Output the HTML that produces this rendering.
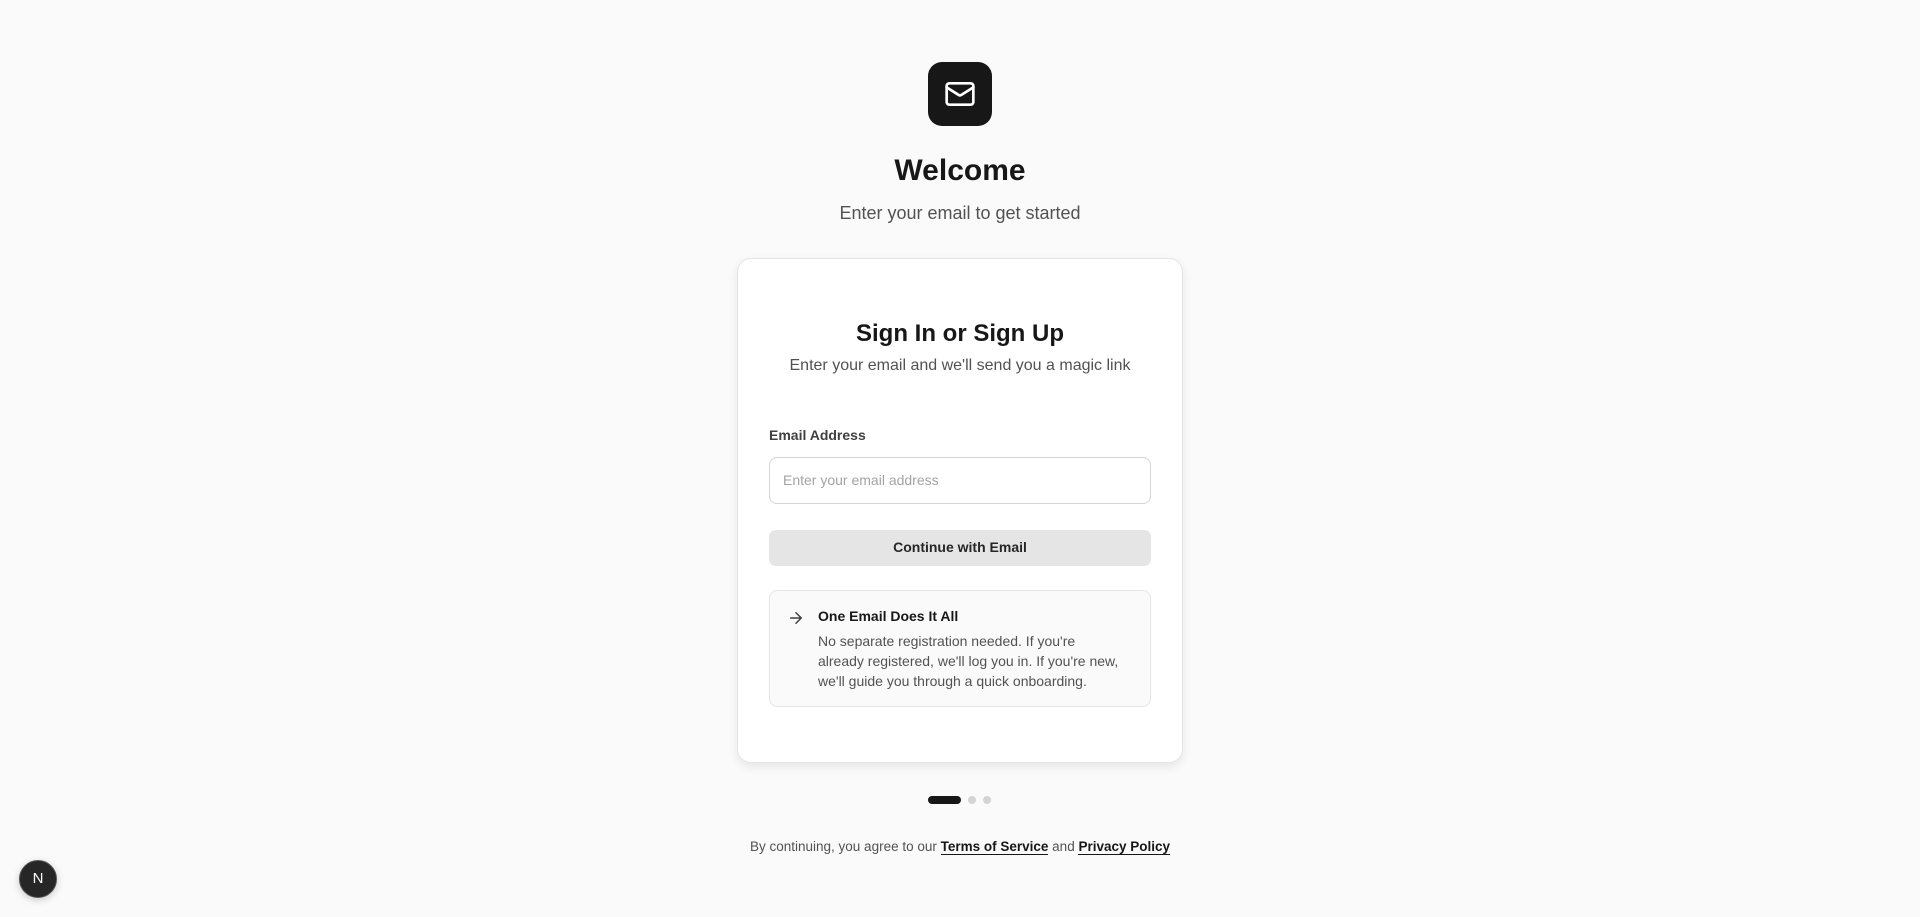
<!DOCTYPE html>
<html><head><meta charset="utf-8"><style>
*{box-sizing:border-box;margin:0;padding:0}
body{width:1920px;height:917px;background:#fafafa;font-family:"Liberation Sans",sans-serif;color:#171717;position:relative;overflow:hidden}
.logo{position:absolute;left:928px;top:62px;width:64px;height:64px;border-radius:14px;background:#171717;display:flex;align-items:center;justify-content:center}
h1{position:absolute;top:154px;width:100%;text-align:center;font-size:30px;font-weight:700}
.sub{position:absolute;top:203px;width:100%;text-align:center;font-size:18px;color:#525252}
.card{position:absolute;left:737px;top:258px;width:446px;height:505px;background:#fff;border:1px solid #e5e5e5;border-radius:14px;box-shadow:0 4px 10px rgba(0,0,0,.08)}
.card h2{position:absolute;top:61px;width:100%;text-align:center;font-size:24px;font-weight:700}
.card .s2{position:absolute;top:98px;width:100%;text-align:center;font-size:16px;color:#525252}
.lbl{position:absolute;left:31px;top:168px;font-size:14px;font-weight:600;color:#404040}
.inp{position:absolute;left:31px;top:198px;width:382px;height:47px;border:1px solid #d4d4d4;border-radius:8px;padding-left:13px;line-height:45px;font-size:14px;color:#a3a3a3}
.btn{position:absolute;left:31px;top:271px;width:382px;height:36px;border-radius:7px;background:#e5e5e5;text-align:center;line-height:35px;font-size:14px;font-weight:700;color:#262626}
.info{position:absolute;left:31px;top:331px;width:382px;height:117px;border:1px solid #e5e5e5;border-radius:8px;background:#fafafa}
.info .t{position:absolute;left:48px;top:17px;font-size:14px;font-weight:700}
.info .d{position:absolute;left:48px;top:40px;width:306px;font-size:14px;line-height:20px;color:#525252}
.info svg{position:absolute;left:17px;top:18px}
.dots{position:absolute;top:796px;left:928px;display:flex;gap:7px;align-items:center}
.dots span{width:8px;height:8px;border-radius:4px;background:#d4d4d4}
.dots span:first-child{width:33px;background:#171717}
.foot{position:absolute;top:839px;width:100%;text-align:center;font-size:13.5px;color:#525252}
.foot b{color:#171717;font-weight:600;border-bottom:1px solid #171717}
.n{position:absolute;left:19px;top:860px;width:38px;height:38px;border-radius:50%;background:#262626;border:1px solid #555;color:#fff;font-size:15px;text-align:center;line-height:36px;box-shadow:0 2px 8px rgba(0,0,0,.2)}
</style></head><body>
<div class="logo"><svg width="32" height="32" viewBox="0 0 24 24" fill="none" stroke="#fff" stroke-width="2" stroke-linecap="round" stroke-linejoin="round"><rect x="2" y="4" width="20" height="16" rx="2"/><path d="M22 7l-8.97 5.7a1.94 1.94 0 0 1-2.06 0L2 7"/></svg></div>
<h1>Welcome</h1>
<div class="sub">Enter your email to get started</div>
<div class="card">
<h2>Sign In or Sign Up</h2>
<div class="s2">Enter your email and we'll send you a magic link</div>
<div class="lbl">Email Address</div>
<div class="inp">Enter your email address</div>
<div class="btn">Continue with Email</div>
<div class="info"><svg width="18" height="18" viewBox="0 0 24 24" fill="none" stroke="#404040" stroke-width="2" stroke-linecap="round" stroke-linejoin="round"><path d="M5 12h14M12 5l7 7-7 7"/></svg>
<div class="t">One Email Does It All</div>
<div class="d">No separate registration needed. If you're already registered, we'll log you in. If you're new, we'll guide you through a quick onboarding.</div></div>
</div>
<div class="dots"><span></span><span></span><span></span></div>
<div class="foot">By continuing, you agree to our <b>Terms of Service</b> and <b>Privacy Policy</b></div>
<div class="n">N</div>
</body></html>
